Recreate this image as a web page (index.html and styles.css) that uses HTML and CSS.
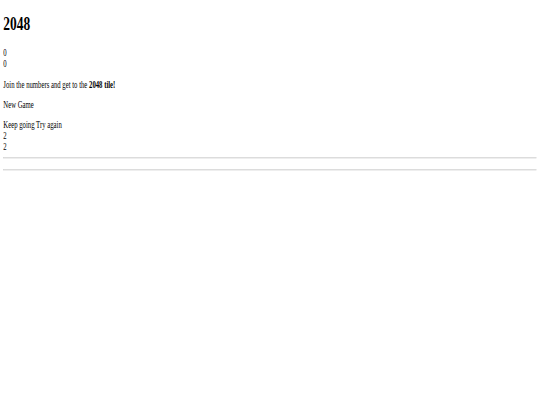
FILE: index.html
```html
<!DOCTYPE html>
<html>
<head>
<meta charset="utf-8">
<title>2048</title>
<link rel="stylesheet" href="styles.css">
</head>
<body>
<div class="viewport">
  <div class="page">
    <div class="container">
      <div class="heading">
        <h1 class="title">2048</h1>
        <div class="scores-container">
          <div class="score-container">0</div>
          <div class="best-container">0</div>
        </div>
      </div>
      <div class="above-game">
        <p class="game-intro">Join the numbers and get to the <strong>2048 tile!</strong></p>
        <a class="restart-button">New Game</a>
      </div>
      <div class="game-container">
        <div class="game-message">
          <p></p>
          <div class="lower">
            <a class="keep-playing-button">Keep going</a>
            <a class="retry-button">Try again</a>
          </div>
        </div>
        <div class="tile-container">
          <div class="tile">2</div>
          <div class="tile">2</div>
        </div>
      </div>
      <hr>
      <p class="game-explanation"></p>
      <hr>
    </div>
  </div>
</div>
</body>
</html>
```

FILE: styles.css
```css
html, body {
  overflow: hidden;
}
html {
  background: #ffffff;
}
body {
  margin: 0;
}
.viewport {
  width: 540px;
  height: 405px;
  overflow: hidden;
}
.page {
  width: 1270px;
  padding: 8px;
  font-family: "Liberation Serif", "Times New Roman", serif;
  font-size: 16px;
  color: #000;
  transform: scale(0.42, 0.6);
  transform-origin: 0 0;
}
.heading .title {
  margin-top: 13.44px;
}
.title {
  font-size: 2em;
  margin: 0.67em 0;
}
.game-intro {
  margin: 1em 0;
}
.game-message p {
  margin: 1em 0;
}
.game-explanation {
  margin: 18px 0;
}
hr {
  margin: 0.5em 0;
  height: 0;
  border: 1px solid #d4d4d4;
}
```
